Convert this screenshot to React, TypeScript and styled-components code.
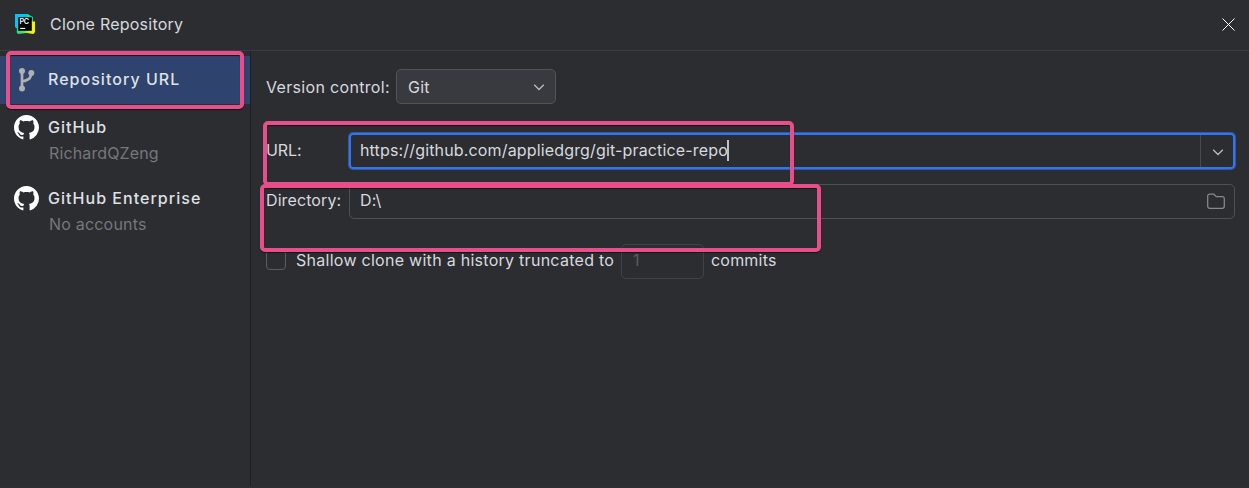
import React from "react";
import styled, { createGlobalStyle } from "styled-components";

const GlobalStyle = createGlobalStyle`
  * { box-sizing: border-box; }
  html, body { margin: 0; background: #2c2d31; overflow: hidden; }
`;

const Dialog = styled.div`
  position: relative;
  display: flex;
  flex-direction: column;
  width: 1249px;
  height: 488px;
  background: #2c2d31;
  border-bottom: 2px solid #302d34;
  color: #d7d9de;
  font-family: Inter, "Liberation Sans", sans-serif;
  font-size: 16px;
  line-height: 20px;
  letter-spacing: 0.2px;
  white-space: nowrap;
`;

const TitleBar = styled.header`
  display: flex;
  align-items: center;
  flex: none;
  height: 51px;
  padding: 0 14px 2px 15px;
  border-bottom: 1px solid #3b3c40;
`;

const Title = styled.span<{ $tracking: number }>`
  flex: 1;
  margin-left: 15px;
  letter-spacing: ${(p) => p.$tracking}px;
`;

const CloseIcon = styled.svg`
  margin: 1px -1px 0 0;
`;

const Body = styled.div`
  display: flex;
  flex: 1;
  min-height: 0;
`;

const Sidebar = styled.nav`
  width: 251px;
  padding-top: 5px;
  border-right: 1px solid #1e1f22;
`;

const SidebarItem = styled.div<{ $selected?: boolean; $height: number }>`
  display: flex;
  height: ${(p) => p.$height}px;
  padding: 11px 0 0 14px;
  background: ${(p) => (p.$selected ? "#2e436e" : "transparent")};
`;

const IconSlot = styled.div`
  width: 34px;
  flex: none;
`;

const ItemName = styled.div<{ $tracking: number }>`
  margin-top: 2px;
  color: #dfe1e5;
  font-weight: 500;
  letter-spacing: ${(p) => p.$tracking}px;
`;

const ItemAccount = styled.div<{ $tracking: number }>`
  margin: 6px 0 0 1px;
  color: #75777b;
  letter-spacing: ${(p) => p.$tracking}px;
`;

const Form = styled.main`
  display: flex;
  flex-direction: column;
  flex: 1;
  padding: 18px 13px 0 15px;
`;

const FormRow = styled.div<{ $height: number; $gap?: number }>`
  display: flex;
  align-items: center;
  height: ${(p) => p.$height}px;
  margin-bottom: ${(p) => p.$gap ?? 0}px;
`;

const Label = styled.label<{ $width: number; $tracking: number; $lift?: number }>`
  flex: none;
  width: ${(p) => p.$width}px;
  letter-spacing: ${(p) => p.$tracking}px;
  padding-bottom: ${(p) => p.$lift ?? 3}px;
`;

const Select = styled.div`
  display: flex;
  align-items: center;
  justify-content: space-between;
  width: 160px;
  height: 35px;
  padding: 0 10px 0 11px;
  border: 1px solid #515459;
  border-radius: 5px;
  background: #393a3f;
`;

const UrlField = styled.div`
  display: flex;
  align-items: center;
  flex: 1;
  height: 36px;
  margin: 0 1px;
  padding-left: 9px;
  border: 2px solid #3574f0;
  border-radius: 4px;
  box-shadow: 0 0 0 1px rgba(53, 116, 240, 0.6);
`;

const UrlText = styled.span`
  letter-spacing: 0.155px;
  padding-bottom: 2px;
`;

const Caret = styled.span`
  width: 2px;
  height: 21px;
  margin: 0 0 1px -1px;
  background: #bfc1c5;
`;

const DropButton = styled.div`
  display: flex;
  align-items: center;
  justify-content: center;
  width: 33px;
  height: 100%;
  margin-left: auto;
  padding: 2px 0 0 1px;
  border-left: 1px solid #484a4f;
`;

const DirectoryField = styled.div`
  display: flex;
  align-items: center;
  justify-content: space-between;
  flex: 1;
  height: 35px;
  margin: 0 1px;
  padding: 0 9px 0 10px;
  border: 1px solid #4e5157;
  border-radius: 5px;
`;

const DirectoryText = styled.span`
  padding-bottom: 3px;
`;

const Checkbox = styled.span`
  width: 20px;
  height: 20px;
  margin: 0 10px 4px 0;
  border: 1px solid #5a5d63;
  border-radius: 4px;
`;

const DepthField = styled.div`
  display: flex;
  align-items: center;
  width: 83px;
  height: 35px;
  margin-right: 7px;
  padding: 0 11px 3px;
  border: 1px solid #414347;
  border-radius: 5px;
  color: #5a5c61;
`;

const Highlight = styled.div<{ $x: number; $y: number; $w: number; $h: number }>`
  position: absolute;
  left: ${(p) => p.$x}px;
  top: ${(p) => p.$y}px;
  width: ${(p) => p.$w}px;
  height: ${(p) => p.$h}px;
  border: 4px solid #e94e8c;
  border-radius: 5px;
  box-shadow: 0 1px 1px rgba(0, 0, 0, 0.6), inset 0 1px 1px rgba(0, 0, 0, 0.6);
  pointer-events: none;
`;

const Chevron = () => (
  <svg width="12" height="8" viewBox="0 0 12 8" fill="none">
    <path d="M1.2 1.7 6 6.5l4.8-4.8" stroke="#b9bbc0" strokeWidth="1.3" />
  </svg>
);

const AppLogo = () => (
  <svg width="20" height="20" viewBox="0 0 20 20">
    <defs>
      <linearGradient id="edge" x1="0" y1="0" x2="1" y2="0">
        <stop offset="0" stopColor="#21d789" />
        <stop offset="0.35" stopColor="#4ee06c" />
        <stop offset="0.75" stopColor="#e8f21a" />
        <stop offset="1" stopColor="#fcf100" />
      </linearGradient>
    </defs>
    <path d="M0 0h13l2.5 3-11 14L0 13z" fill="#07c3f2" />
    <path d="M12.5 0 18 3v6l-6-4z" fill="#21d789" />
    <path d="M2.5 12 13 6l4.5 1.5H20V18l-1.5 2-6.8-1-9 1L1.6 18z" fill="url(#edge)" />
    <path d="M3.2 3.2h13.6v13.6H3.2z" fill="#000" />
    <path d="M5.2 14.4h5" stroke="#fff" strokeWidth="1.1" />
    <text x="4.4" y="10.4" fontSize="7.2" fontWeight="600" fill="#fff" letterSpacing="-0.2">PC</text>
  </svg>
);

const BranchIcon = () => (
  <svg width="24" height="26" viewBox="0 0 24 26" fill="none">
    <path d="M8 4v18M17.3 5.5c0 5-1.3 7.3-9.3 9" stroke="#afb1b3" strokeWidth="2.7" />
    <circle cx="8" cy="4" r="3" fill="#afb1b3" />
    <circle cx="8" cy="21.5" r="3" fill="#afb1b3" />
    <circle cx="17.3" cy="6" r="3" fill="#afb1b3" />
  </svg>
);

const GitHubIcon = () => (
  <svg width="25" height="25" viewBox="0 0 16 16" fill="#fff">
    <path d="M8 0C3.58 0 0 3.58 0 8c0 3.54 2.29 6.53 5.47 7.59.4.07.55-.17.55-.38 0-.19-.01-.82-.01-1.49-2.01.37-2.53-.49-2.69-.94-.09-.23-.48-.94-.82-1.13-.28-.15-.68-.52-.01-.53.63-.01 1.08.58 1.23.82.72 1.21 1.87.87 2.33.66.07-.52.28-.87.51-1.07-1.78-.2-3.64-.89-3.64-3.95 0-.87.31-1.59.82-2.15-.08-.2-.36-1.02.08-2.12 0 0 .67-.21 2.2.82.64-.18 1.32-.27 2-.27s1.36.09 2 .27c1.53-1.04 2.2-.82 2.2-.82.44 1.1.16 1.92.08 2.12.51.56.82 1.27.82 2.15 0 3.07-1.87 3.75-3.65 3.95.29.25.54.73.54 1.48 0 1.07-.01 1.93-.01 2.2 0 .21.15.46.55.38A8.01 8.01 0 0 0 16 8c0-4.42-3.58-8-8-8z" />
  </svg>
);

const FolderIcon = () => (
  <svg width="18" height="17" viewBox="0 0 18 17" fill="none">
    <path d="M.7 3A2 2 0 0 1 2.7 1h4l2.5 2.7h6.1a2 2 0 0 1 2 2v7.6a2 2 0 0 1-2 2H2.7a2 2 0 0 1-2-2z" stroke="#868990" strokeWidth="1.25" strokeLinejoin="round" />
  </svg>
);

export default function App() {
  return (
    <Dialog>
      <GlobalStyle />
      <TitleBar>
        <AppLogo />
        <Title $tracking={0.24}>Clone Repository</Title>
        <CloseIcon width="14" height="13" viewBox="0 0 14 13" fill="none">
          <path d="M.5.5l12 12M12.5.5l-12 12" stroke="#fff" strokeWidth="1" />
        </CloseIcon>
      </TitleBar>
      <Body>
        <Sidebar>
          <SidebarItem $selected $height={48}>
            <IconSlot><BranchIcon /></IconSlot>
            <ItemName $tracking={1.03}>Repository URL</ItemName>
          </SidebarItem>
          <SidebarItem $height={71}>
            <IconSlot><GitHubIcon /></IconSlot>
            <div>
              <ItemName $tracking={1.03}>GitHub</ItemName>
              <ItemAccount $tracking={0.13}>RichardQZeng</ItemAccount>
            </div>
          </SidebarItem>
          <SidebarItem $height={71}>
            <IconSlot><GitHubIcon /></IconSlot>
            <div>
              <ItemName $tracking={1.03}>GitHub Enterprise</ItemName>
              <ItemAccount $tracking={0.2}>No accounts</ItemAccount>
            </div>
          </SidebarItem>
        </Sidebar>
        <Form>
          <FormRow $height={35} $gap={28}>
            <Label $width={130} $tracking={0.32} $lift={0}>Version control:</Label>
            <Select>Git<Chevron /></Select>
          </FormRow>
          <FormRow $height={38} $gap={14}>
            <Label $width={82} $tracking={-0.1}>URL:</Label>
            <UrlField>
              <UrlText>https://github.com/appliedgrg/git-practice-repo</UrlText>
              <Caret />
              <DropButton><Chevron /></DropButton>
            </UrlField>
          </FormRow>
          <FormRow $height={35} $gap={25}>
            <Label $width={82} $tracking={0.1}>Directory:</Label>
            <DirectoryField>
              <DirectoryText>D:\</DirectoryText>
              <FolderIcon />
            </DirectoryField>
          </FormRow>
          <FormRow $height={35}>
            <Checkbox />
            <Label $width={325} $tracking={0.275}>Shallow clone with a history truncated to</Label>
            <DepthField>1</DepthField>
            <Label $width={70} $tracking={0.2}>commits</Label>
          </FormRow>
        </Form>
      </Body>
      <Highlight $x={6} $y={51} $w={237.5} $h={58} />
      <Highlight $x={262.6} $y={121} $w={531} $h={65} />
      <Highlight $x={259.7} $y={184} $w={561.8} $h={68} />
    </Dialog>
  );
}
